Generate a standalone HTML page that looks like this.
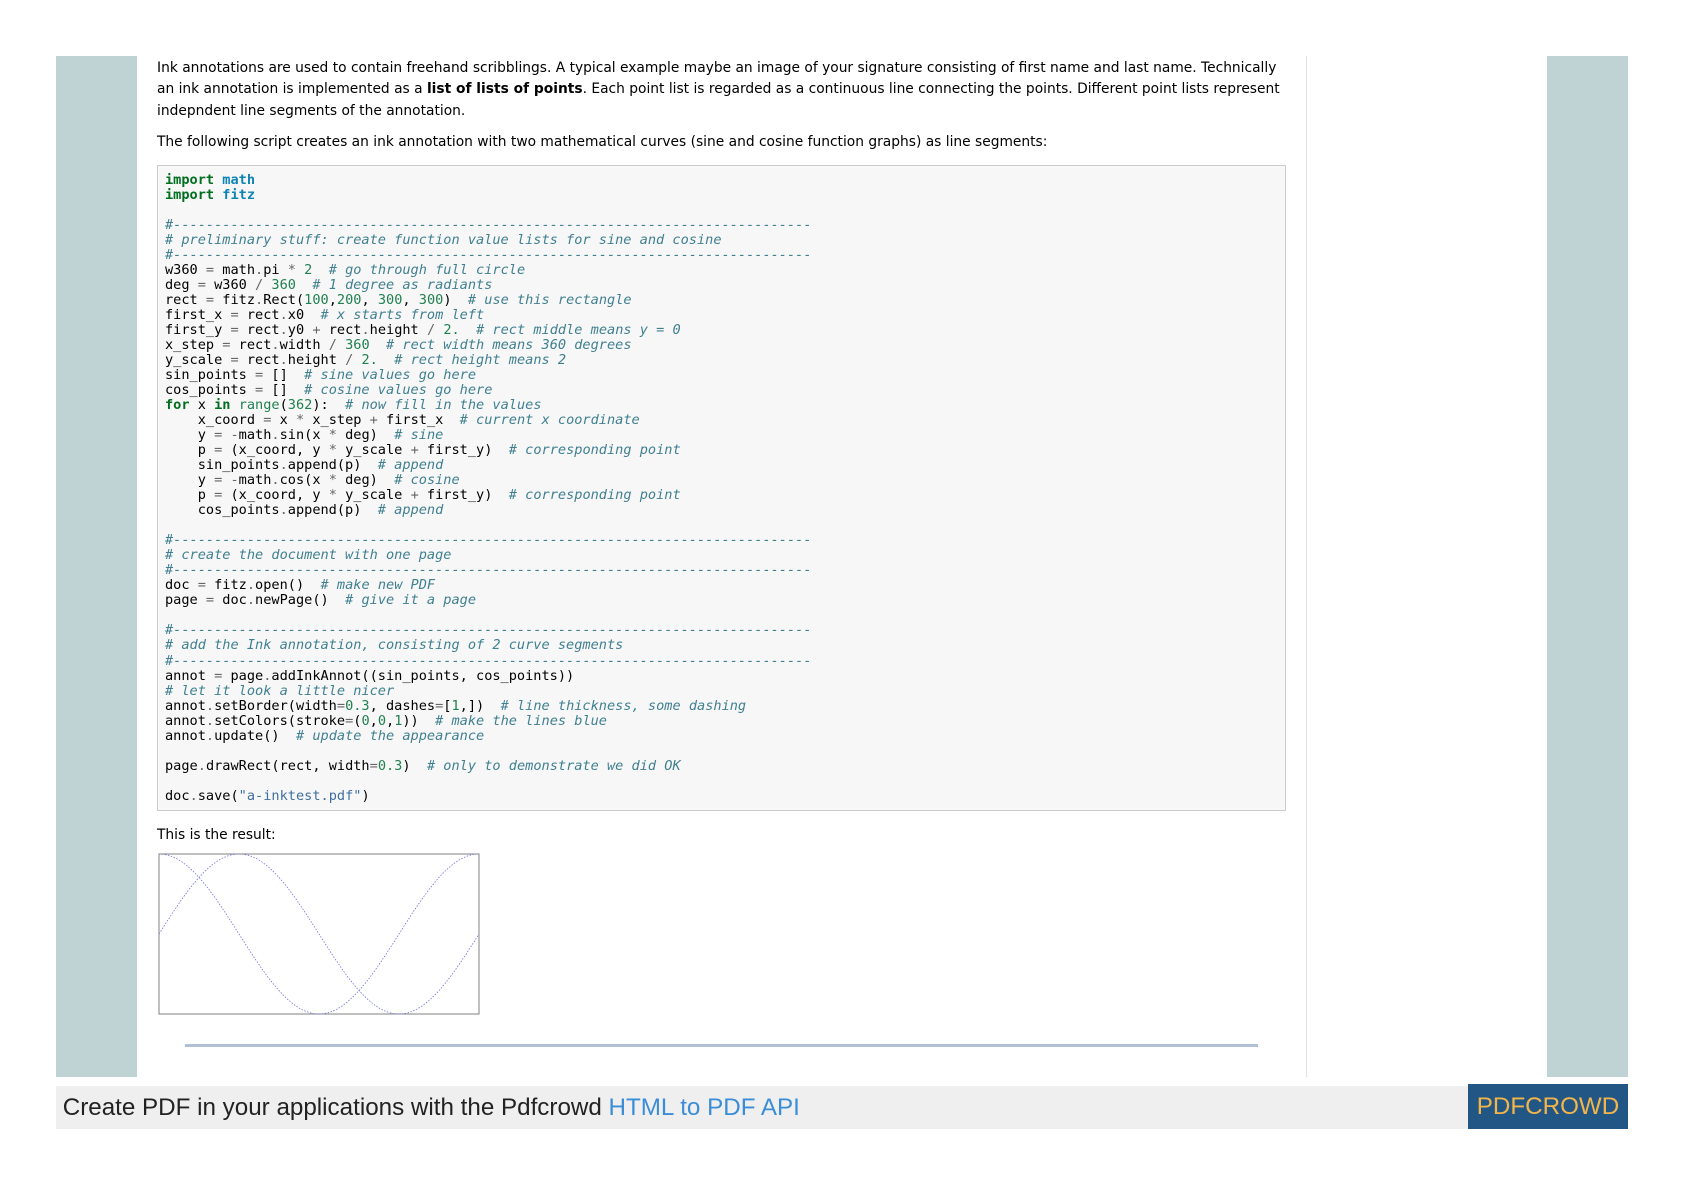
<!DOCTYPE html>
<html><head><meta charset="utf-8"><style>
body{margin:0;width:1684px;height:1192px;background:#fff;position:relative;font-family:"DejaVu Sans","Liberation Sans",sans-serif;}
.sb{position:absolute;background:#bfd3d5;}
.vl{position:absolute;left:1306px;top:56px;width:1px;height:1021px;background:#dde3e3;}
.p{position:absolute;left:157px;width:1136px;font-size:13.8px;line-height:21.3px;color:#000;margin:0;}
pre{position:absolute;left:157px;top:165px;width:1113px;height:630px;margin:0;padding:7px 7px;background:#f7f7f7;border:1px solid #ccc;font-family:"DejaVu Sans Mono","Liberation Mono",monospace;font-size:13.6px;line-height:15.02px;color:#000;}
.c{color:#408090;font-style:italic}.k{color:#007020;font-weight:bold}.n{color:#0e84b5;font-weight:bold}.m{color:#208050}.o{color:#666}.s{color:#4070a0}
.foot{position:absolute;left:56px;top:1086px;width:1412px;height:43px;background:#efefef;font-family:"Liberation Sans",sans-serif;font-size:24.2px;line-height:43px;color:#222;}
.foot span{color:#3a8dd6}
.pc{position:absolute;left:1468px;top:1084px;width:160px;height:45px;background:#225785;color:#f3b54a;font-family:"Liberation Sans",sans-serif;font-size:24.2px;line-height:45px;text-align:center;}
</style></head><body>
<div class="sb" style="left:56px;top:56px;width:81px;height:1021px"></div>
<div class="sb" style="left:1547px;top:56px;width:81px;height:1021px"></div>
<div class="vl"></div>
<p class="p" style="top:58px">Ink annotations are used to contain freehand scribblings. A typical example maybe an image of your signature consisting of first name and last name. Technically an ink annotation is implemented as a <b>list of lists of points</b>. Each point list is regarded as a continuous line connecting the points. Different point lists represent indepndent line segments of the annotation.</p>
<p class="p" style="top:132px">The following script creates an ink annotation with two mathematical curves (sine and cosine function graphs) as line segments:</p>
<pre><span class="k">import</span> <span class="n">math</span>
<span class="k">import</span> <span class="n">fitz</span>

<span class="c">#------------------------------------------------------------------------------</span>
<span class="c"># preliminary stuff: create function value lists for sine and cosine</span>
<span class="c">#------------------------------------------------------------------------------</span>
w360 <span class="o">=</span> math<span class="o">.</span>pi <span class="o">*</span> <span class="m">2</span>  <span class="c"># go through full circle</span>
deg <span class="o">=</span> w360 <span class="o">/</span> <span class="m">360</span>  <span class="c"># 1 degree as radiants</span>
rect <span class="o">=</span> fitz<span class="o">.</span>Rect(<span class="m">100</span>,<span class="m">200</span>, <span class="m">300</span>, <span class="m">300</span>)  <span class="c"># use this rectangle</span>
first_x <span class="o">=</span> rect<span class="o">.</span>x0  <span class="c"># x starts from left</span>
first_y <span class="o">=</span> rect<span class="o">.</span>y0 <span class="o">+</span> rect<span class="o">.</span>height <span class="o">/</span> <span class="m">2.</span>  <span class="c"># rect middle means y = 0</span>
x_step <span class="o">=</span> rect<span class="o">.</span>width <span class="o">/</span> <span class="m">360</span>  <span class="c"># rect width means 360 degrees</span>
y_scale <span class="o">=</span> rect<span class="o">.</span>height <span class="o">/</span> <span class="m">2.</span>  <span class="c"># rect height means 2</span>
sin_points <span class="o">=</span> []  <span class="c"># sine values go here</span>
cos_points <span class="o">=</span> []  <span class="c"># cosine values go here</span>
<span class="k">for</span> x <span class="k">in</span> <span class="m">range</span>(<span class="m">362</span>):  <span class="c"># now fill in the values</span>
    x_coord <span class="o">=</span> x <span class="o">*</span> x_step <span class="o">+</span> first_x  <span class="c"># current x coordinate</span>
    y <span class="o">=</span> <span class="o">-</span>math<span class="o">.</span>sin(x <span class="o">*</span> deg)  <span class="c"># sine</span>
    p <span class="o">=</span> (x_coord, y <span class="o">*</span> y_scale <span class="o">+</span> first_y)  <span class="c"># corresponding point</span>
    sin_points<span class="o">.</span>append(p)  <span class="c"># append</span>
    y <span class="o">=</span> <span class="o">-</span>math<span class="o">.</span>cos(x <span class="o">*</span> deg)  <span class="c"># cosine</span>
    p <span class="o">=</span> (x_coord, y <span class="o">*</span> y_scale <span class="o">+</span> first_y)  <span class="c"># corresponding point</span>
    cos_points<span class="o">.</span>append(p)  <span class="c"># append</span>

<span class="c">#------------------------------------------------------------------------------</span>
<span class="c"># create the document with one page</span>
<span class="c">#------------------------------------------------------------------------------</span>
doc <span class="o">=</span> fitz<span class="o">.</span>open()  <span class="c"># make new PDF</span>
page <span class="o">=</span> doc<span class="o">.</span>newPage()  <span class="c"># give it a page</span>

<span class="c">#------------------------------------------------------------------------------</span>
<span class="c"># add the Ink annotation, consisting of 2 curve segments</span>
<span class="c">#------------------------------------------------------------------------------</span>
annot <span class="o">=</span> page<span class="o">.</span>addInkAnnot((sin_points, cos_points))
<span class="c"># let it look a little nicer</span>
annot<span class="o">.</span>setBorder(width<span class="o">=</span><span class="m">0.3</span>, dashes<span class="o">=</span>[<span class="m">1</span>,])  <span class="c"># line thickness, some dashing</span>
annot<span class="o">.</span>setColors(stroke<span class="o">=</span>(<span class="m">0</span>,<span class="m">0</span>,<span class="m">1</span>))  <span class="c"># make the lines blue</span>
annot<span class="o">.</span>update()  <span class="c"># update the appearance</span>

page<span class="o">.</span>drawRect(rect, width<span class="o">=</span><span class="m">0.3</span>)  <span class="c"># only to demonstrate we did OK</span>

doc<span class="o">.</span>save(<span class="s">"a-inktest.pdf"</span>)</pre>
<p class="p" style="top:825px">This is the result:</p>
<svg style="position:absolute;left:158px;top:853px" width="324" height="163" viewBox="0 0 324 163">
<rect x="1" y="1" width="320" height="160" fill="#fff" stroke="#808080" stroke-width="1"/>
<path id="s" fill="none" stroke="#7070e0" stroke-width="0.8" stroke-dasharray="1.5,1.5"/>
<path id="c" fill="none" stroke="#7070e0" stroke-width="0.8" stroke-dasharray="1.5,1.5"/>
</svg>
<div style="position:absolute;left:185px;top:1044px;width:1073px;height:3px;background:#b1bfd3"></div>
<div class="foot">&nbsp;Create PDF in your applications with the Pdfcrowd <span>HTML to PDF API</span></div>
<div class="pc">PDFCROWD</div>
<script>
var s="",c="";for(var i=0;i<362;i+=2){var x=1+i*320/360,r=i*Math.PI/180;s+=(i?"L":"M")+x.toFixed(1)+","+(81-Math.sin(r)*80).toFixed(1);c+=(i?"L":"M")+x.toFixed(1)+","+(81-Math.cos(r)*80).toFixed(1);}
document.getElementById("s").setAttribute("d",s);document.getElementById("c").setAttribute("d",c);
</script>
</body></html>
